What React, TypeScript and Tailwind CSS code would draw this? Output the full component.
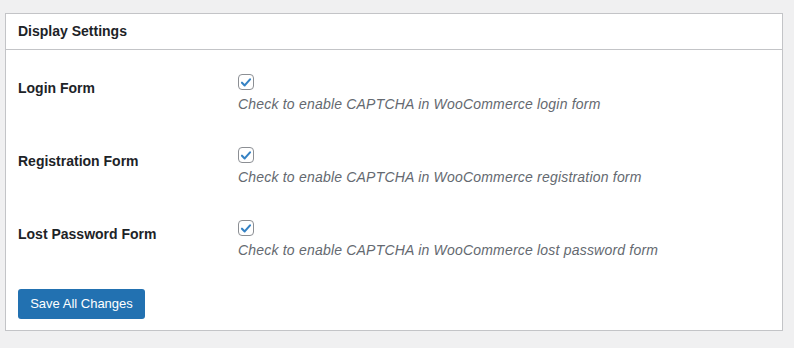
const rows = [
  { label: 'Login Form', help: 'Check to enable CAPTCHA in WooCommerce login form' },
  { label: 'Registration Form', help: 'Check to enable CAPTCHA in WooCommerce registration form' },
  { label: 'Lost Password Form', help: 'Check to enable CAPTCHA in WooCommerce lost password form' },
];

function CheckedBox() {
  return (
    <span className="flex h-4 w-4 items-center justify-center rounded-[4px] border border-[#8c8f94] bg-white">
      <svg viewBox="0 0 16 16" className="h-[15px] w-[15px]">
        <path
          d="M3.4 8.2 L6.5 11.3 L12.6 4.4"
          fill="none"
          stroke="#3582c4"
          strokeWidth="2.4"
          strokeLinecap="round"
          strokeLinejoin="round"
        />
      </svg>
    </span>
  );
}

export default function App() {
  return (
    <main className="min-h-[348px] bg-[#f0f0f1] pl-[5px] pr-[12px] pt-[13px] font-['Liberation_Sans',Arial,sans-serif]">
      <div className="w-[778px] border border-[#c3c4c7] bg-white">
        <div className="flex h-[36px] items-center border-b border-[#c3c4c7] px-3">
          <h2 className="text-[14px] font-bold text-[#1d2327]">Display Settings</h2>
        </div>

        <div className="px-3 pb-[11px]">
          {rows.map((row) => (
            <div key={row.label} className="flex h-[73px]">
              <div className="w-[220px] pt-[28px] text-[14px] font-bold leading-5 text-[#1d2327]">
                {row.label}
              </div>
              <div className="pt-[24px]">
                <CheckedBox />
                <p className="mt-[4px] text-[14px] italic leading-[21px] tracking-[0.2px] text-[#646970]">
                  {row.help}
                </p>
              </div>
            </div>
          ))}

          <button className="mt-[20px] flex h-[30px] w-[127px] items-center justify-center rounded-[3px] bg-[#2271b1] text-[13px] text-white">
            Save All Changes
          </button>
        </div>
      </div>
    </main>
  );
}
